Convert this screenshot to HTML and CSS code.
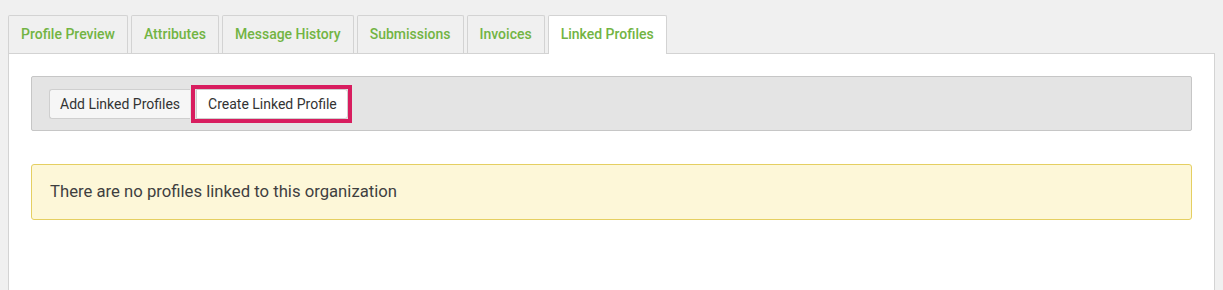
FILE: index.html
```html
<!DOCTYPE html>
<html>
<head>
<meta charset="utf-8">
<link rel="stylesheet" href="styles.css">
</head>
<body>
<div class="tabs">
  <div class="tab">Profile Preview</div>
  <div class="tab">Attributes</div>
  <div class="tab">Message History</div>
  <div class="tab">Submissions</div>
  <div class="tab">Invoices</div>
  <div class="tab active">Linked Profiles</div>
</div>
<div class="panel">
  <div class="toolbar">
    <div class="btn-group">
      <button class="btn btn-first">Add Linked Profiles</button>
      <button class="btn btn-last highlighted">Create Linked Profile</button>
    </div>
  </div>
  <div class="alert">There are no profiles linked to this organization</div>
</div>
</body>
</html>
```

FILE: styles.css
```css
html, body {
  margin: 0;
  padding: 0;
}
body {
  background: #f0f0f0;
  font-family: Roboto, "Liberation Sans", sans-serif;
  padding: 15px 8px 0 8px;
  height: 290px;
  box-sizing: border-box;
  overflow: hidden;
}
.tabs {
  display: flex;
  gap: 3px;
  position: relative;
  z-index: 2;
  margin-bottom: -1px;
}
.tab {
  height: 38px;
  line-height: 37px;
  padding: 0 12px;
  border: 1px solid #d3d3d3;
  border-bottom: none;
  border-radius: 2px 2px 0 0;
  background: #f0f0f0;
  color: #72b443;
  font-size: 14px;
  font-weight: 500;
  box-shadow: inset 0 -1px 0 #d3d3d3;
}
.tab.active {
  background: #fff;
  box-shadow: none;
}
.panel {
  background: #fff;
  border: 1px solid #d3d3d3;
  border-bottom: none;
  padding: 22px 22px 0 22px;
  height: 240px;
  position: relative;
  z-index: 1;
}
.toolbar {
  background: #e4e4e4;
  border: 1px solid #c6c6c6;
  border-radius: 2px;
  padding: 12px 17px 11px 17px;
  display: flex;
}
.btn-group {
  display: flex;
}
.btn {
  height: 30px;
  font-family: Roboto, "Liberation Sans", sans-serif;
  font-size: 14px;
  color: #333;
  background: #f6f6f6;
  border: 1px solid #cfcfcf;
  padding: 0 10px;
  margin: 0;
  cursor: pointer;
}
.btn-first {
  border-radius: 3px 0 0 3px;
  border-right: none;
}
.btn-last {
  border-radius: 0 3px 3px 0;
  background: #fff;
  margin-left: 6px;
  padding: 0 10px 0 11px;
}
.highlighted {
  position: relative;
}
.highlighted::after {
  content: "";
  position: absolute;
  top: -5px;
  left: -6px;
  right: -5px;
  bottom: -5px;
  border: 4px solid #d81d5f;
}
.alert {
  margin-top: 33px;
  background: #fdf7d8;
  border: 1px solid #e5cf61;
  border-radius: 3px;
  padding: 18px 18px;
  font-size: 16.7px;
  line-height: 18px;
  color: #3f3f3f;
}
```
